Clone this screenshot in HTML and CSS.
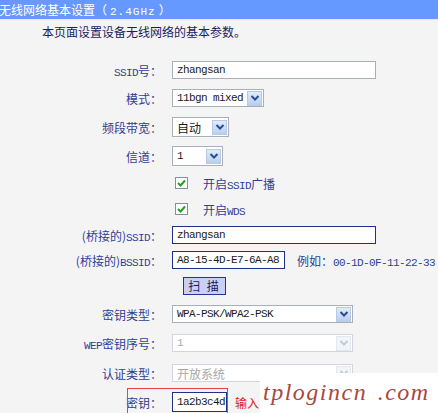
FILE: index.html
```html
<!DOCTYPE html>
<html lang="zh-CN">
<head>
  <meta charset="UTF-8" />
  <title>无线网络基本设置</title>
  <link rel="stylesheet" href="styles.css">
</head>
<body>
  <div class="title">无线网络基本设置（<span class="en wide">2.4GHz</span>）</div>
  <p class="desc">本页面设置设备无线网络的基本参数。</p>

  <div class="form">
    <div class="row">
      <span class="lbl"><span class="en">SSID</span>号：</span>
      <div class="field w-ssid"><span class="en">zhangsan</span></div>
    </div>
    <div class="row">
      <span class="lbl">模式：</span>
      <div class="field select w-mode"><span class="en">11bgn mixed</span><span class="arrow"><svg width="10" height="8" viewBox="0 0 10 8"><polyline points="1.5,2 5,5.5 8.5,2" /></svg></span></div>
    </div>
    <div class="row tall">
      <span class="lbl">频段带宽：</span>
      <div class="field select w-bw tall-field">自动<span class="arrow"><svg width="10" height="8" viewBox="0 0 10 8"><polyline points="1.5,2 5,5.5 8.5,2" /></svg></span></div>
    </div>
    <div class="row">
      <span class="lbl">信道：</span>
      <div class="field select w-ch tall-field"><span class="en">1</span><span class="arrow"><svg width="10" height="8" viewBox="0 0 10 8"><polyline points="1.5,2 5,5.5 8.5,2" /></svg></span></div>
    </div>
    <div class="row short">
      <span class="lbl"></span>
      <span class="check"><svg width="9" height="8" viewBox="0 0 9 8"><polyline points="1,4 3.5,6.5 8,1.5" /></svg></span>
      <span class="check-text">开启<span class="en">SSID</span>广播</span>
    </div>
    <div class="row short">
      <span class="lbl"></span>
      <span class="check"><svg width="9" height="8" viewBox="0 0 9 8"><polyline points="1,4 3.5,6.5 8,1.5" /></svg></span>
      <span class="check-text">开启<span class="en">WDS</span></span>
    </div>
    <div class="row short">
      <span class="lbl">(桥接的)<span class="en">SSID</span>：</span>
      <div class="field dark w-ssid"><span class="en">zhangsan</span></div>
    </div>
    <div class="row tight">
      <span class="lbl">(桥接的)<span class="en">BSSID</span>：</span>
      <div class="field dark w-bssid"><span class="en">A8-15-4D-E7-6A-A8</span></div>
      <span class="hint">例如：<span class="en">00-1D-0F-11-22-33</span></span>
    </div>
    <div class="row">
      <span class="lbl"></span>
      <span class="btn">扫&nbsp;描</span>
    </div>
    <div class="row">
      <span class="lbl">密钥类型：</span>
      <div class="field select w-key"><span class="en">WPA-PSK/WPA2-PSK</span><span class="arrow"><svg width="10" height="8" viewBox="0 0 10 8"><polyline points="1.5,2 5,5.5 8.5,2" /></svg></span></div>
    </div>
    <div class="row tall">
      <span class="lbl"><span class="en">WEP</span>密钥序号：</span>
      <div class="field select off w-key"><span class="en">1</span><span class="arrow"><svg width="10" height="8" viewBox="0 0 10 8"><polyline points="1.5,2 5,5.5 8.5,2" /></svg></span></div>
    </div>
    <div class="row tall">
      <span class="lbl">认证类型：</span>
      <div class="field select off w-key">开放系统<span class="arrow"><svg width="10" height="8" viewBox="0 0 10 8"><polyline points="1.5,2 5,5.5 8.5,2" /></svg></span></div>
    </div>
    <div class="row">
      <span class="lbl">密钥：</span>
      <div class="field dark w-pass tall-field"><span class="en">1a2b3c4d</span></div>
      <span class="note">输入</span>
    </div>
  </div>

  <!-- 标注框和水印 -->
  <div class="mark"></div>
  <div class="watermark">tplogincn .com</div>
</body>
</html>
```

FILE: styles.css
```css
body {
  margin: 0;
  width: 438px;
  height: 413px;
  overflow: hidden;
  position: relative;
  background: #f4f4f4;
  font-family: "Noto Sans CJK SC", sans-serif;
  font-size: 12px;
  color: #2f3f96;
}

.en {
  font-family: "Liberation Mono", "DejaVu Sans Mono", monospace;
  font-size: 11px;
  letter-spacing: -0.6px;
}

.en.wide {
  letter-spacing: 1px;
  margin: 0 3px;
}

.title {
  height: 19px;
  line-height: 19px;
  background: #6699ff;
  color: #fff;
  white-space: nowrap;
  margin-left: -1px;
  border-bottom: 1px solid #e2e8f4;
}

.desc {
  margin: 2px 0 0 42px;
  line-height: 20px;
  color: #1c1c5e;
}

.form {
  margin-top: 14px;
}

.row {
  display: flex;
  align-items: center;
  height: 28px;
}

.row.tall {
  height: 30px;
}

.row.short {
  height: 26px;
}

.row.tight {
  height: 24px;
}

.lbl {
  flex: none;
  width: 162px;
  margin-right: 10px;
  text-align: right;
  white-space: nowrap;
}

.field {
  box-sizing: border-box;
  display: flex;
  align-items: center;
  height: 18px;
  padding-left: 4px;
  background: #fff;
  border: 1px solid #a9afb8;
  color: #1a1a1a;
  white-space: nowrap;
}

.field.tall-field {
  height: 20px;
}

.field.dark {
  border-color: #1f2f8c;
}

.field.select {
  padding-right: 1px;
}

.arrow {
  margin-left: auto;
  width: 15px;
  height: 15px;
  display: flex;
  align-items: center;
  justify-content: center;
  background: linear-gradient(#e2ecfa, #b9cfee);
  border: 1px solid #b7c9e6;
  box-sizing: border-box;
}

.arrow polyline {
  fill: none;
  stroke: #2b4c94;
  stroke-width: 2;
}

.field.off {
  border-color: #d2d6dc;
  color: #a8a8a8;
}

.field.off .arrow {
  background: #f1f4f9;
  border-color: #e3e8f0;
}

.field.off .arrow polyline {
  stroke: #c3cad8;
}

.w-ssid { width: 204px; }
.w-mode { width: 92px; }
.w-bw { width: 57px; }
.w-ch { width: 51px; }
.w-bssid { width: 113px; }
.w-key { width: 181px; }
.w-pass { width: 55px; }

.check {
  flex: none;
  box-sizing: border-box;
  width: 13px;
  height: 12px;
  margin-left: 3px;
  display: flex;
  align-items: center;
  justify-content: center;
  background: #fff;
  border: 1px solid #7f90ab;
}

.check polyline {
  fill: none;
  stroke: #23a023;
  stroke-width: 2;
}

.check-text {
  margin-left: 15px;
}

.hint {
  margin-left: 12px;
  white-space: nowrap;
}

.btn {
  margin-left: 11px;
  box-sizing: border-box;
  width: 43px;
  height: 18px;
  line-height: 16px;
  text-align: center;
  letter-spacing: 2px;
  background: #c9d0f4;
  border: 1px solid #24349a;
  color: #1a1a5c;
}

.note {
  margin-left: 8px;
  color: #e02020;
  white-space: nowrap;
}

.mark {
  position: absolute;
  left: 127px;
  top: 388px;
  width: 101px;
  height: 30px;
  box-sizing: border-box;
  border: 1px solid #e0444c;
}

.watermark {
  position: absolute;
  left: 260px;
  top: 373px;
  right: 0;
  bottom: 0;
  padding-left: 3px;
  background: #fff;
  font-family: "Liberation Serif", serif;
  font-style: italic;
  font-size: 24px;
  letter-spacing: 1.5px;
  word-spacing: 3px;
  line-height: 38px;
  color: #a9483c;
  white-space: nowrap;
}
```
